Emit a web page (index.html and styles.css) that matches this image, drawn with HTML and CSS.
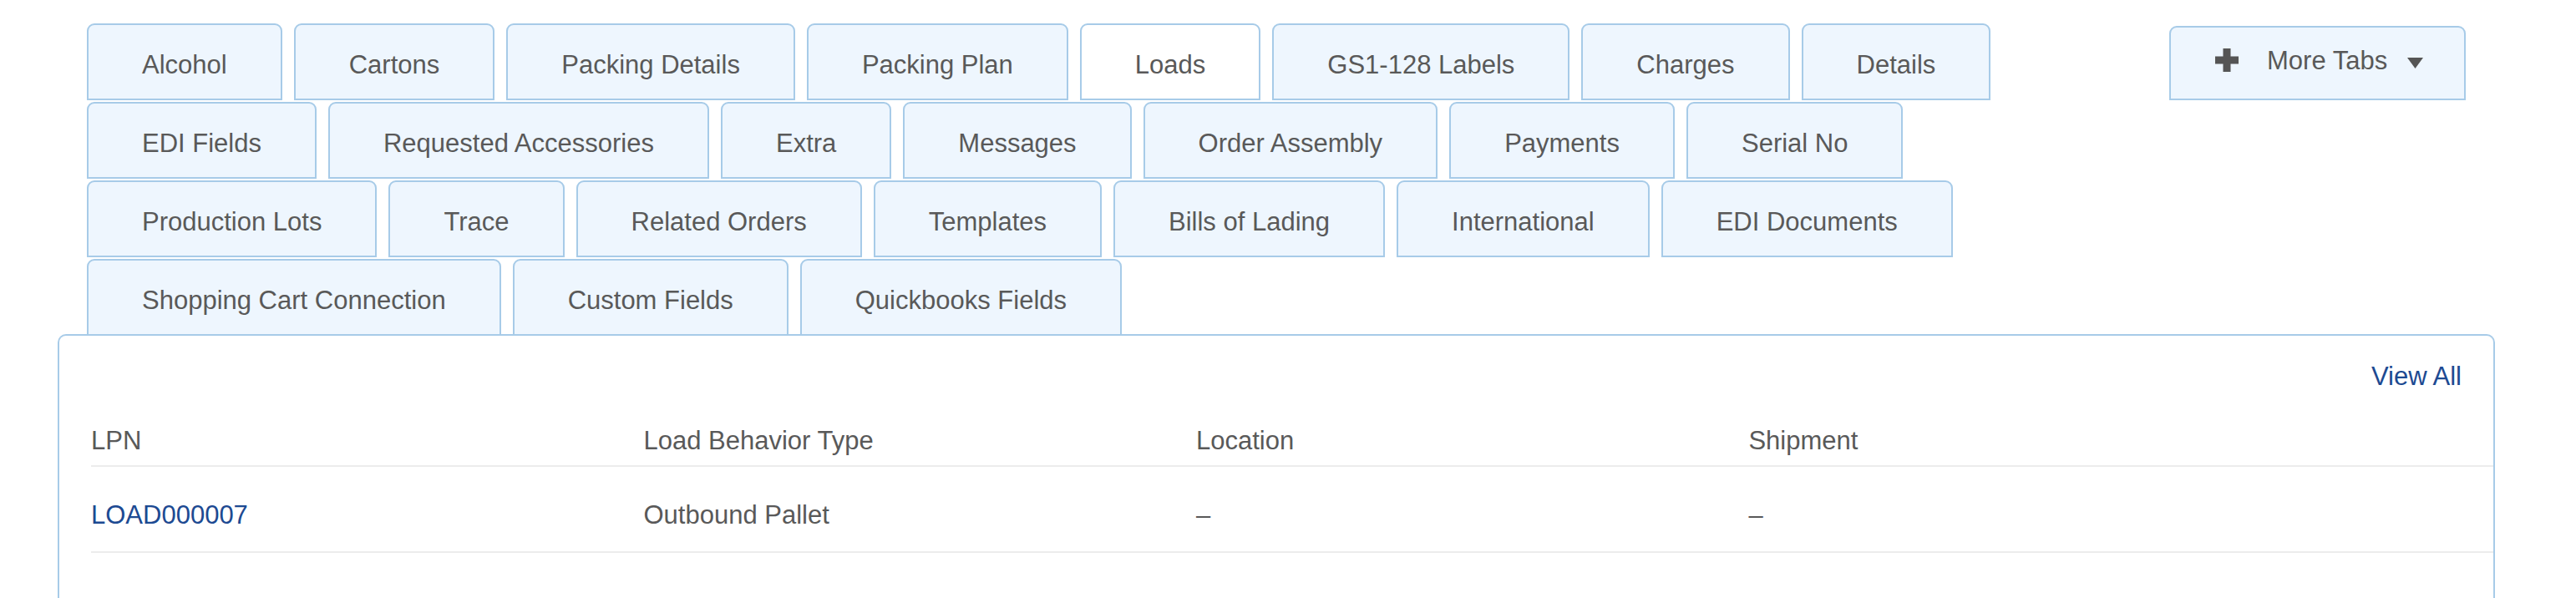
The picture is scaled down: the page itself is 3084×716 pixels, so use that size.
FILE: index.html
```html
<!DOCTYPE html>
<html lang="en">
<head>
    <meta charset="UTF-8">
    <meta name="viewport" content="width=device-width, initial-scale=1.0">
    <title>Order - Loads</title>
    <link rel="stylesheet" href="styles.css">
</head>
<body>
    <div class="page">
        <div class="tab-header">
            <ul class="tabs">
                <li class="tab">Alcohol</li>
                <li class="tab">Cartons</li>
                <li class="tab">Packing Details</li>
                <li class="tab">Packing Plan</li>
                <li class="tab active">Loads</li>
                <li class="tab">GS1-128 Labels</li>
                <li class="tab">Charges</li>
                <li class="tab">Details</li>
                <li class="tab">EDI Fields</li>
                <li class="tab">Requested Accessories</li>
                <li class="tab">Extra</li>
                <li class="tab">Messages</li>
                <li class="tab">Order Assembly</li>
                <li class="tab">Payments</li>
                <li class="tab">Serial No</li>
                <li class="tab">Production Lots</li>
                <li class="tab">Trace</li>
                <li class="tab">Related Orders</li>
                <li class="tab">Templates</li>
                <li class="tab">Bills of Lading</li>
                <li class="tab">International</li>
                <li class="tab">EDI Documents</li>
                <li class="tab">Shopping Cart Connection</li>
                <li class="tab">Custom Fields</li>
                <li class="tab">Quickbooks Fields</li>
            </ul>
            <button class="more-tabs">
                <svg class="plus" width="28" height="28" viewBox="0 0 28 28">
                    <path d="M9.5 0h9v9.5H28v9h-9.5V28h-9v-9.5H0v-9h9.5z" fill="#555"/>
                </svg>
                <span class="more-label">More Tabs</span>
                <svg class="caret" width="19" height="13" viewBox="0 0 19 13">
                    <polygon points="0,0 19,0 9.5,13" fill="#555"/>
                </svg>
            </button>
        </div>

        <div class="panel">
            <div class="panel-top">
                <a href="#" class="link">View All</a>
            </div>
            <div class="table">
                <div class="row head">
                    <div>LPN</div>
                    <div>Load Behavior Type</div>
                    <div>Location</div>
                    <div>Shipment</div>
                </div>
                <div class="row">
                    <div><a href="#" class="link">LOAD000007</a></div>
                    <div>Outbound Pallet</div>
                    <div>&ndash;</div>
                    <div>&ndash;</div>
                </div>
            </div>
        </div>
    </div>
</body>
</html>
```

FILE: styles.css
```css
* {
    box-sizing: border-box;
    margin: 0;
    padding: 0;
}
body {
    font-family: "Liberation Sans", Arial, Helvetica, sans-serif;
    font-size: 31px;
    color: #595959;
    background-color: #fff;
}
.page {
    width: 2918px;
    margin-left: 69px;
    padding-top: 28px;
}
.tab-header {
    display: flex;
    flex-direction: row;
    align-items: flex-start;
    padding: 0 35px;
}
.tabs {
    list-style: none;
    display: flex;
    flex-wrap: wrap;
    flex-grow: 1;
    column-gap: 14px;
    row-gap: 2px;
    margin-right: 30px;
}
.tab {
    height: 92px;
    padding: 8px 64px 0;
    line-height: 80px;
    white-space: nowrap;
    border: 2px solid #a7cbe8;
    border-radius: 9px 9px 0 0;
    background-color: #eef6fe;
    cursor: pointer;
}
.tab.active {
    background-color: #fff;
}
.more-tabs {
    display: flex;
    align-items: center;
    flex-shrink: 0;
    width: 355px;
    height: 89px;
    margin-top: 3px;
    padding: 0 44px 6px 53px;
    border: 2px solid #a7cbe8;
    border-radius: 9px 9px 0 0;
    background-color: #eef6fe;
    font-family: inherit;
    font-size: 31px;
    color: #595959;
    white-space: nowrap;
    cursor: pointer;
}
.plus {
    flex-shrink: 0;
    margin-top: -1px;
}
.more-label {
    margin: 0 24px 0 34px;
    line-height: 40px;
}
.caret {
    flex-shrink: 0;
    margin-top: 5px;
}
.panel {
    margin-top: -2px;
    min-height: 340px;
    border: 2px solid #a7cbe8;
    border-bottom: none;
    border-radius: 10px 10px 0 0;
    background-color: #fff;
}
.panel-top {
    display: flex;
    justify-content: flex-end;
    padding: 31px 38px 0;
    line-height: 36px;
}
.link {
    color: #1d4a92;
    text-decoration: none;
}
.table {
    margin: 41px 0 0 38px;
}
.row {
    display: grid;
    grid-template-columns: 23% 23% 23% 1fr;
    line-height: 36px;
    padding: 40px 0 25px;
    border-bottom: 2px solid #ececec;
}
.row.head {
    padding: 0 0 11px;
}
```
